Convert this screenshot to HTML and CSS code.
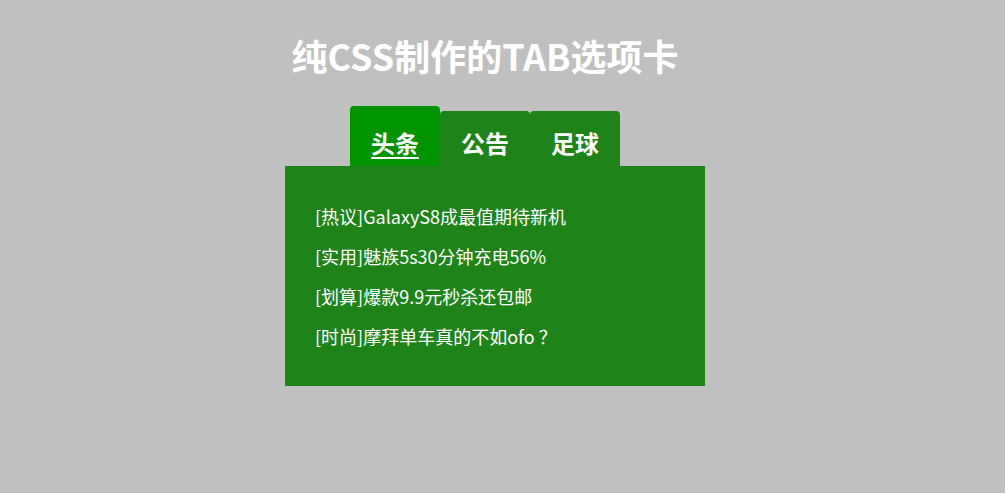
FILE: index.html
```html
<!DOCTYPE html>
<html lang="zh-CN">
<head>
<meta charset="utf-8">
<title>纯CSS制作的TAB选项卡</title>
<link rel="stylesheet" href="styles.css">
</head>
<body>
<div class="wrap">
  <h1 class="title">纯CSS制作的TAB选项卡</h1>
  <div class="tabs">
    <a class="tab active" href="#">头条</a>
    <a class="tab" href="#">公告</a>
    <a class="tab" href="#">足球</a>
  </div>
  <div class="panel">
    <p class="item">[热议]GalaxyS8成最值期待新机</p>
    <p class="item">[实用]魅族5s30分钟充电56%</p>
    <p class="item">[划算]爆款9.9元秒杀还包邮</p>
    <p class="item">[时尚]摩拜单车真的不如ofo ？</p>
  </div>
</div>
</body>
</html>
```
FILE: styles.css
```css
html, body {
  margin: 0;
  padding: 0;
}
body {
  background: #c0c0c0;
  font-family: "Noto Sans CJK SC", "Noto Sans", sans-serif;
  color: #fff;
  text-spacing-trim: space-all;
}
.wrap {
  width: 420px;
  margin-left: 285px;
}
.title {
  margin: 0;
  padding: 32px 20px 0 0;
  height: 106px;
  box-sizing: border-box;
  text-align: center;
  font-size: 36px;
  line-height: 46px;
  font-weight: bold;
  color: #fff;
}
.tabs {
  display: flex;
  align-items: flex-end;
  padding-left: 65px;
  height: 60px;
}
.tab {
  display: block;
  width: 90px;
  height: 55px;
  box-sizing: border-box;
  padding-top: 15px;
  text-align: center;
  font-size: 24px;
  line-height: 34px;
  font-weight: bold;
  color: #fff;
  text-decoration: none;
  background: #1e8419;
  border-radius: 4px 4px 0 0;
}
.tab.active {
  height: 60px;
  padding-top: 20px;
  background: #009400;
  text-decoration: underline;
  text-underline-offset: 4px;
  text-decoration-thickness: 2px;
}
.panel {
  background: #1e8419;
  height: 220px;
  box-sizing: border-box;
  padding: 30px 30px 0;
}
.item {
  margin: 0;
  font-size: 18px;
  line-height: 40px;
  height: 40px;
  white-space: nowrap;
}
```
